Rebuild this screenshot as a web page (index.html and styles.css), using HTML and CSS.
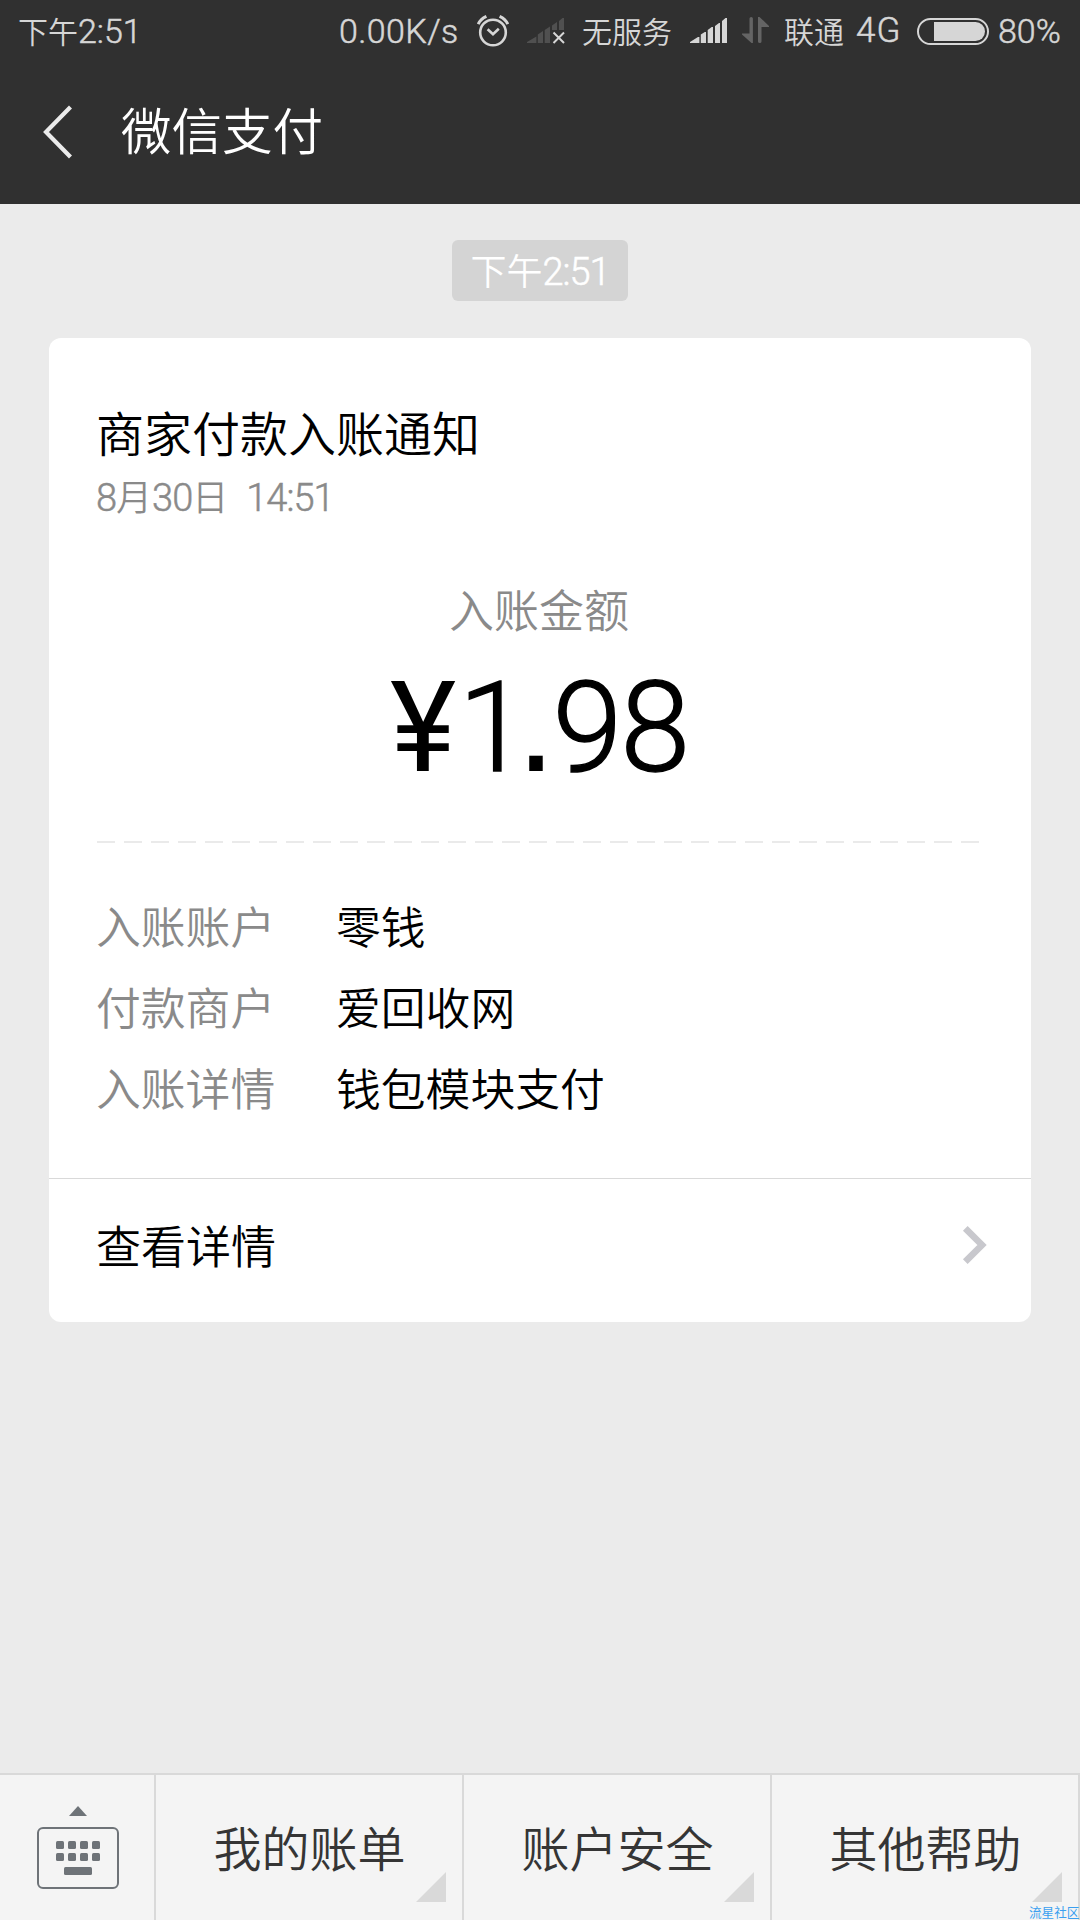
FILE: index.html
```html
<!DOCTYPE html>
<html lang="zh-CN">
<head>
<meta charset="utf-8">
<title>微信支付</title>
<link rel="stylesheet" href="styles.css">
</head>
<body>
<div class="phone">
  <header class="top">
    <div class="status">
      <div class="clock">下午<span class="num">2:51</span></div>
      <div class="speed num">0.00K/s</div>
      <svg class="alarm" width="34" height="34" viewBox="0 0 34 34" fill="none" stroke="#d6d6d6">
        <circle cx="17" cy="18.5" r="12.8" stroke-width="2.6"/>
        <path d="M11.6 15.2l5.4 5 5.8-5.4" stroke-width="2.6"/>
        <path d="M2.2 10.2Q4.6 5 10.4 2.4M31.8 10.2Q29.400 5 23.600 2.400" stroke-width="3"/>
      </svg>
      <svg class="signal-off" width="38" height="28" viewBox="0 0 38 28">
        <path fill="#505050" d="M0 26v-1l9.400-5.500v6.500zM10.800 26v-8.500l5.200-3.500v12zM17.700 26v-13l5.300-3.500v16.500zM25 13V8.500L30 5v8zM32 13V4l3.500-3H37v12z"/>
        <path stroke="#d6d6d6" stroke-width="2" d="M26.500 15.500l10.500 10.500M37 15.500L26.500 26"/>
      </svg>
      <div class="carrier">无服务</div>
      <svg class="signal" width="38" height="28" viewBox="0 0 38 28">
        <path fill="#d6d6d6" d="M0 26v-1l8-5h1.400v6zM10.800 26v-8.500l4-2.500h1.200v11zM17.700 26v-13l4-3h1.300v16zM25 26V9l4-3h1v20zM32 26V4l3.500-3H37v25z"/>
      </svg>
      <svg class="transfer" width="28" height="28" viewBox="0 0 28 28">
        <path fill="#646464" d="M7.500 1.500q0-1.500 1.700-1.500t1.700 1.500V26H9.500L0 17.500V16.500h7.500zM16 0h1.500L27 9v1h-7.500v14.500q0 1.500-1.700 1.500T16 24.500z"/>
      </svg>
      <div class="operator">联通</div>
      <div class="network num">4G</div>
      <div class="battery"><div class="level"></div></div>
      <div class="percent num">80%</div>
    </div>
    <div class="titlebar">
      <svg class="back" width="32" height="56" viewBox="0 0 32 56">
        <path fill="none" stroke="#ebebeb" stroke-width="4.200" d="M28.500 3L4 28l24.500 25"/>
      </svg>
      <h1 class="title">微信支付</h1>
    </div>
  </header>

  <main class="chat">
    <div class="stamp">下午<span class="num">2:51</span></div>
    <section class="card">
      <div class="card-body">
        <h2 class="card-title">商家付款入账通知</h2>
        <div class="date"><span class="num">8</span><span class="cjk">月</span><span class="num">30</span><span class="cjk">日</span><span class="num hour">14:51</span></div>
        <div class="amount-label">入账金额</div>
        <div class="amount"><span class="yen">¥</span><span class="one">1</span><span class="dot">.</span><span>98</span></div>
        <div class="dashes"></div>
        <dl class="details">
          <dt>入账账户</dt><dd>零钱</dd>
          <dt>付款商户</dt><dd>爱回收网</dd>
          <dt>入账详情</dt><dd>钱包模块支付</dd>
        </dl>
      </div>
      <div class="card-link">
        <span>查看详情</span>
        <svg width="26" height="40" viewBox="0 0 26 40">
          <path fill="none" stroke="#c8c8cd" stroke-width="6.600" d="M3.300 3.300L20 20 3.300 36.700"/>
        </svg>
      </div>
    </section>
  </main>

  <nav class="menu">
    <div class="keys">
      <svg width="84" height="86" viewBox="0 0 84 86" fill="#6e7378">
        <path d="M33 11l9-10 9 10z"/>
        <rect x="2" y="23" width="80" height="60" rx="5" fill="none" stroke="#6e7378" stroke-width="2"/>
        <rect x="20" y="36" width="8" height="8" rx="1.500"/><rect x="32" y="36" width="8" height="8" rx="1.500"/><rect x="44" y="36" width="8" height="8" rx="1.500"/><rect x="56" y="36" width="8" height="8" rx="1.500"/>
        <rect x="20" y="48" width="8" height="8" rx="1.500"/><rect x="32" y="48" width="8" height="8" rx="1.500"/><rect x="44" y="48" width="8" height="8" rx="1.500"/><rect x="56" y="48" width="8" height="8" rx="1.500"/>
        <rect x="28" y="62" width="28" height="8" rx="1.500"/>
      </svg>
    </div>
    <div class="item">我的账单</div>
    <div class="item">账户安全</div>
    <div class="item">其他帮助</div>
  </nav>
  <div class="watermark">流星社区</div>
</div>
</body>
</html>
```
FILE: styles.css
```css
* { box-sizing: border-box; }

body {
  margin: 0;
  background: #ebebeb;
  font-family: "Noto Sans CJK SC", sans-serif;
  font-weight: 350;
}

h1, h2, dl, dd { margin: 0; font-weight: 350; }
svg { display: block; flex: none; }

.phone {
  position: relative;
  width: 1080px;
  height: 1920px;
  overflow: hidden;
  display: flex;
  flex-direction: column;
}

.num {
  font-family: Roboto, "Noto Sans CJK SC", sans-serif;
  -webkit-text-stroke: 0.500px currentColor;
}

/* status bar and title */
.top { height: 204px; background: #303030; flex: none; }

.status {
  height: 62px;
  padding-left: 18px;
  display: flex;
  align-items: center;
  color: #d6d6d6;
  font-size: 30px;
  line-height: 58px;
  white-space: nowrap;
}
.status > div { flex: none; }
.status > .clock, .carrier, .operator { height: 60px; }
.status .num { font-size: 34px; line-height: 62px; }
.status .clock .num { line-height: 58px; }
.clock { width: 321px; }
.speed { width: 137px; letter-spacing: 0.400px; }
.alarm { width: 34px; margin-right: 17px; }
.signal-off { margin-right: 17px; }
.carrier { width: 108px; }
.signal { margin-right: 14px; }
.transfer { margin-right: 14px; }
.operator { width: 72px; }
.status .network { width: 61px; font-size: 35px; line-height: 64px; letter-spacing: 1px; }
.battery {
  width: 72px;
  height: 27px;
  margin-right: 9px;
  padding: 2px 2px 2px 15px;
  border: 2px solid #d6d6d6;
  border-radius: 14px;
}
.level { height: 19px; background: #d6d6d6; border-radius: 0 10px 10px 0; }

.titlebar { height: 142px; padding: 42px 0 0 42px; display: flex; gap: 47px; }
.title { color: #fff; font-size: 50.500px; line-height: 49px; }

/* conversation */
.chat {
  flex: 1;
  padding: 36px 49px 0;
  display: flex;
  flex-direction: column;
  align-items: center;
}
.stamp {
  width: 176px;
  height: 61px;
  margin-bottom: 36.500px;
  border-radius: 6px;
  background: #d4d4d4;
  color: #fff;
  font-size: 36px;
  line-height: 58px;
  text-align: center;
}
.stamp .num, .date .num { font-size: 38px; letter-spacing: -1px; }

.card { width: 982px; height: 984.500px; border-radius: 12px; background: #fff; }
.card-body { height: 841.500px; padding: 58.500px 49px 0 47px; border-bottom: 1px solid #d9d9d9; }
.card-title { height: 72px; color: #000; font-size: 48px; line-height: 71px; }
.date { height: 54px; color: #8a8a8a; font-size: 36px; line-height: 54px; }
.hour { margin-left: 18px; }
.amount-label {
  height: 68px;
  margin-top: 53px;
  color: #8a8a8a;
  font-size: 45px;
  line-height: 68px;
  text-align: center;
}
.amount {
  height: 160px;
  color: #000;
  font-family: Roboto, sans-serif;
  font-size: 126px;
  line-height: 170px;
  letter-spacing: -2.200px;
  text-align: center;
  -webkit-text-stroke: 1.400px #000;
}
.yen, .dot { font-weight: 400; -webkit-text-stroke: 0; }
.yen { letter-spacing: 2px; }
.one { letter-spacing: -12px; }
.dot { font-family: "Liberation Sans", sans-serif; font-size: 142px; line-height: 1; letter-spacing: -3px; }
.dashes {
  height: 2px;
  margin: 38px 0 0 1px;
  background: repeating-linear-gradient(90deg, #eaeaea 0 18px, transparent 18px 27px);
}
.details {
  padding-top: 42px;
  display: grid;
  grid-template-columns: 240px 1fr;
  grid-auto-rows: 81px;
  font-size: 44.800px;
  line-height: 80px;
}
.details dt { color: #8a8a8a; }
.details dd { color: #000; }
.card-link {
  height: 143px;
  padding: 0 43px 11px 47px;
  display: flex;
  align-items: center;
  justify-content: space-between;
  color: #000;
  font-size: 45px;
}
.card-link span { padding-bottom: 2px; }

/* bottom menu */
.menu {
  height: 147px;
  display: grid;
  grid-template-columns: 156px 308px 308px 308px;
  border-top: 2px solid #d9d9d9;
  background: #f4f4f4;
}
.keys { padding: 30px 0 0 36px; border-right: 2px solid #d9d9d9; }
.item {
  position: relative;
  padding-left: 1px;
  border-right: 2px solid #d9d9d9;
  color: #353535;
  font-size: 48px;
  line-height: 143px;
  text-align: center;
}
.item::after {
  content: "";
  position: absolute;
  right: 16px;
  top: 97px;
  width: 30px;
  height: 30px;
  background: #d9d9d9;
  clip-path: polygon(100% 0, 100% 100%, 0 100%);
}
.watermark {
  position: absolute;
  left: 1029px;
  top: 1904px;
  color: #3a9ff0;
  font-size: 12.600px;
  font-weight: 400;
  line-height: 16px;
  white-space: nowrap;
}
```
